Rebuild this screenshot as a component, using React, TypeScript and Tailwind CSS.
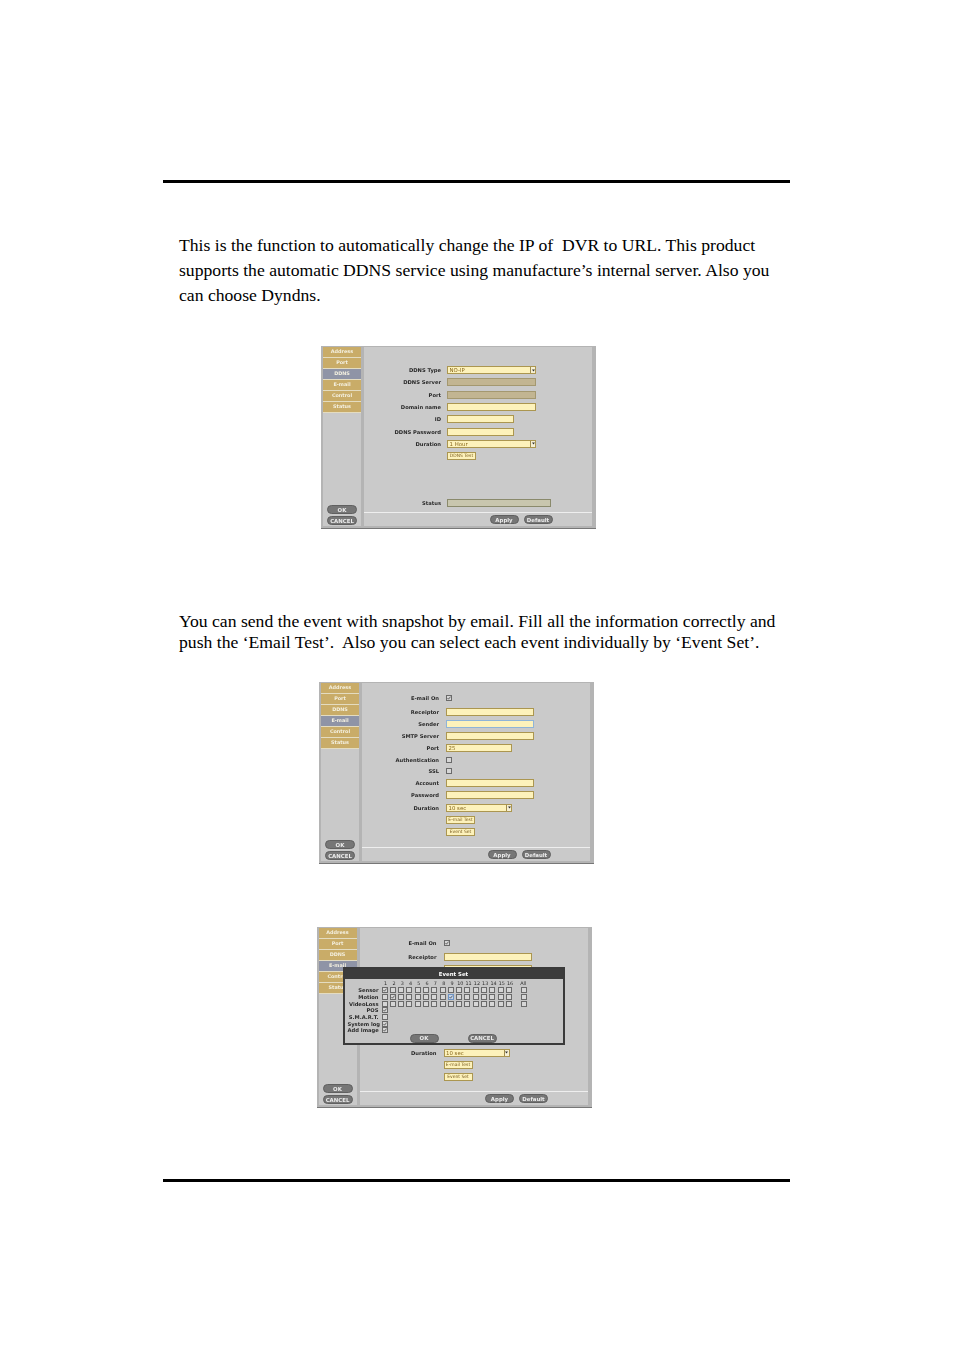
import React from "react";

const TABS = ["Address", "Port", "DDNS", "E-mail", "Control", "Status"];

function Tab({ label, active }: { label: string; active: boolean }) {
  return (
    <div
      className={`h-[11px] flex items-center justify-center text-[4.9px] font-bold text-[#f4f0e0] border-b border-[#e4dcc0] ${
        active ? "bg-[#8f94a6]" : "bg-[#c9ac68]"
      }`}
    >
      {label}
    </div>
  );
}

function GreyBtn({ label, className }: { label: string; className: string }) {
  return (
    <div
      className={`h-[9px] rounded-full bg-[#767676] border border-[#606060] text-[#ececec] text-[5.4px] leading-[6px] font-bold flex items-center justify-center ${className}`}
    >
      {label}
    </div>
  );
}

function Arrow() {
  return (
    <span className="absolute right-0 top-0 bottom-0 w-[5px] bg-[#f6f0d4] border-l border-[#a08c4c] flex items-center justify-center">
      <svg width="3" height="3" viewBox="0 0 3 3">
        <path d="M0 .6h3L1.5 2.6z" fill="#333" />
      </svg>
    </span>
  );
}

function Field({
  w,
  text,
  select,
  disabled,
  focus,
  status,
}: {
  w: string;
  text?: string;
  select?: boolean;
  disabled?: boolean;
  focus?: boolean;
  status?: boolean;
}) {
  const tone = status
    ? "bg-[#c8c6ae] border-[#8a8a6c]"
    : disabled
      ? "bg-[#c2b592] border-[#a49870]"
      : focus
        ? "bg-[#fdf2bb] border-[#8fb4d8]"
        : "bg-[#fdf2bb] border-[#ab9650]";
  return (
    <div className={`relative h-[8px] border ${tone} ${w} text-[5.4px] leading-[6px] pl-[1.5px] text-[#8a6a20] flex items-center`}>
      {text}
      {select && <Arrow />}
    </div>
  );
}

function Check({ on, focus }: { on?: boolean; focus?: boolean }) {
  return (
    <span
      className={`w-[6px] h-[6px] border flex items-center justify-center shrink-0 ${
        focus ? "border-[#6d93c4] bg-[#c4d4ea]" : "border-[#6a6a6a] bg-[#d6d6d6]"
      }`}
    >
      {on && (
        <svg width="4" height="4" viewBox="0 0 4 4">
          <path d="M.5 2l1 1.2L3.6.6" fill="none" stroke="#333" strokeWidth=".7" />
        </svg>
      )}
    </span>
  );
}

function Row({ label, labelW, className, children }: { label?: string; labelW: string; className: string; children: React.ReactNode }) {
  return (
    <div className={`flex items-center ${className}`}>
      <span className={`${labelW} text-right text-[5.2px] leading-[6px] font-bold text-[#2a2a2a] whitespace-nowrap`}>{label}</span>
      {children}
    </div>
  );
}

function TextBtn({ label }: { label: string }) {
  return (
    <div className="h-[8.5px] w-[29px] border border-[#ab9650] bg-[#fdf2bb] text-[4.5px] leading-[6px] text-[#7a5c20] flex items-center justify-center whitespace-nowrap">
      {label}
    </div>
  );
}

function Window({
  active,
  className,
  mainClass,
  children,
}: {
  active: string;
  className: string;
  mainClass: string;
  children: React.ReactNode;
}) {
  return (
    <div className={`relative w-[275px] bg-[#b4b4b4] flex pl-[2px] pt-[1px] pb-[2px] pr-[4px] gap-[3px] border-b border-[#777] blur-[0.5px] ${className}`} style={{ fontFamily: '"DejaVu Sans", sans-serif' }}>
      <div className="w-[38px] bg-[#c9c9c9] flex flex-col">
        {TABS.map((t) => (
          <Tab key={t} label={t} active={t === active} />
        ))}
        <div className="mt-auto flex flex-col items-center gap-[2px] pb-[1px]">
          <GreyBtn label="OK" className="w-[30px]" />
          <GreyBtn label="CANCEL" className="w-[30px]" />
        </div>
      </div>
      <div className="flex-1 bg-[#cacaca] flex flex-col">
        <div className={`flex-1 ${mainClass}`}>{children}</div>
        <div className="h-[14px] border-t border-[#eeeeee] flex items-center justify-end gap-[5px] pr-[39.5px]">
          <GreyBtn label="Apply" className="w-[29px]" />
          <GreyBtn label="Default" className="w-[29px]" />
        </div>
      </div>
    </div>
  );
}

function DdnsForm() {
  const l = "w-[77px]";
  return (
    <>
      <Row label="DDNS Type" labelW={l} className="h-[12.3px] gap-[6px]"><Field w="w-[89px]" text="NO-IP" select /></Row>
      <Row label="DDNS Server" labelW={l} className="h-[12.3px] gap-[6px]"><Field w="w-[89px]" disabled /></Row>
      <Row label="Port" labelW={l} className="h-[12.3px] gap-[6px]"><Field w="w-[89px]" disabled /></Row>
      <Row label="Domain name" labelW={l} className="h-[12.3px] gap-[6px]"><Field w="w-[89px]" /></Row>
      <Row label="ID" labelW={l} className="h-[12.3px] gap-[6px]"><Field w="w-[67px]" /></Row>
      <Row label="DDNS Password" labelW={l} className="h-[12.3px] gap-[6px]"><Field w="w-[67px]" /></Row>
      <Row label="Duration" labelW={l} className="h-[12.3px] gap-[6px]"><Field w="w-[89px]" text="1 Hour" select /></Row>
      <Row labelW={l} className="h-[12.3px] gap-[6px]"><TextBtn label="DDNS Test" /></Row>
      <Row label="Status" labelW={l} className="h-[12.3px] gap-[6px] mt-[34px]"><Field w="w-[104px]" status /></Row>
    </>
  );
}

function EmailForm({ focusSender }: { focusSender?: boolean }) {
  const l = "w-[77px]";
  return (
    <>
      <Row label="E-mail On" labelW={l} className="h-[14.5px] gap-[7px]"><Check on /></Row>
      <Row label="Receiptor" labelW={l} className="h-[12.3px] gap-[7px]"><Field w="w-[88px]" /></Row>
      <Row label="Sender" labelW={l} className="h-[12.3px] gap-[7px]"><Field w="w-[88px]" focus={focusSender} /></Row>
      <Row label="SMTP Server" labelW={l} className="h-[12.3px] gap-[7px]"><Field w="w-[88px]" /></Row>
      <Row label="Port" labelW={l} className="h-[12px] gap-[7px]"><Field w="w-[66px]" text="25" /></Row>
      <Row label="Authentication" labelW={l} className="h-[10.5px] gap-[7px]"><Check /></Row>
      <Row label="SSL" labelW={l} className="h-[12px] gap-[7px]"><Check /></Row>
      <Row label="Account" labelW={l} className="h-[12.5px] gap-[7px]"><Field w="w-[88px]" /></Row>
      <Row label="Password" labelW={l} className="h-[12px] gap-[7px]"><Field w="w-[88px]" /></Row>
      <Row label="Duration" labelW={l} className="h-[12.3px] gap-[7px]"><Field w="w-[66px]" text="10 sec" select /></Row>
      <Row labelW={l} className="h-[12.3px] gap-[7px]"><TextBtn label="E-mail Test" /></Row>
      <Row labelW={l} className="h-[12.3px] gap-[7px]"><TextBtn label="Event Set" /></Row>
    </>
  );
}

const NUMS = ["1", "2", "3", "4", "5", "6", "7", "8", "9", "10", "11", "12", "13", "14", "15", "16"];

function EventRow({ label, first, focus, all }: { label: string; first?: number; focus?: number; all?: boolean }) {
  return (
    <div className="flex items-center h-[6.7px]">
      <span className="w-[31px] text-right text-[5.2px] leading-[6px] font-bold text-[#2c2c2c] whitespace-nowrap">{label}</span>
      <div className="flex ml-[3px]">
        {NUMS.map((n, i) => (
          <span key={n} className="w-[8.3px] flex justify-start">
            <Check on={first === i || focus === i} focus={focus === i} />
          </span>
        ))}
      </div>
      {all && (
        <span className="ml-[6.5px]">
          <Check />
        </span>
      )}
    </div>
  );
}

function SingleRow({ label, on }: { label: string; on?: boolean }) {
  return (
    <div className="flex items-center h-[6.7px]">
      <span className="w-[31px] text-right text-[5.2px] leading-[6px] font-bold text-[#2c2c2c] whitespace-nowrap">{label}</span>
      <span className="ml-[3px]">
        <Check on={on} />
      </span>
    </div>
  );
}

function EventSet() {
  return (
    <div className="absolute left-[26px] top-[40px] w-[222px] h-[78px] border-[2px] border-[#3a3a3a] bg-[#c6c6c6] flex flex-col">
      <div className="h-[10px] bg-[#3c3c3c] text-white text-[5.4px] leading-[6px] font-bold flex items-center justify-center">Event Set</div>
      <div className="pl-[3px]">
        <div className="flex h-[8px] items-center ml-[34px] text-[4.9px] leading-[6px] text-[#2c2c2c]">
          {NUMS.map((n) => (
            <span key={n} className="w-[8.3px] text-center">{n}</span>
          ))}
          <span className="ml-[6px]">All</span>
        </div>
        <EventRow label="Sensor" first={0} all />
        <EventRow label="Motion" first={1} focus={8} all />
        <EventRow label="VideoLoss" all />
        <SingleRow label="POS" on />
        <SingleRow label="S.M.A.R.T." />
        <SingleRow label="System log" on />
        <SingleRow label="Add Image" on />
      </div>
      <div className="flex gap-[29px] ml-[65px]">
        <GreyBtn label="OK" className="w-[29px]" />
        <GreyBtn label="CANCEL" className="w-[29px]" />
      </div>
    </div>
  );
}

export default function App() {
  return (
    <div className="w-[954px] h-[1350px] bg-white overflow-hidden pt-[180px] pl-[163px] text-black" style={{ fontFamily: '"Liberation Serif", serif' }}>
      <div className="w-[627px]">
        <div className="h-[3px] bg-black" />
        <p className="mt-[50px] ml-[16px] text-[17.65px] leading-[25px] whitespace-pre">
          This is the function to automatically change the IP of  DVR to URL. This product{"\n"}
          supports the automatic DDNS service using manufacture’s internal server. Also you{"\n"}
          can choose Dyndns.
        </p>
        <Window active="DDNS" className="mt-[38px] ml-[158px] h-[183px]" mainClass="pt-[17px]">
          <DdnsForm />
        </Window>
        <p className="mt-[82px] ml-[16px] text-[17.65px] leading-[21px] whitespace-pre">
          You can send the event with snapshot by email. Fill all the information correctly and{"\n"}
          push the ‘Email Test’.  Also you can select each event individually by ‘Event Set’.
        </p>
        <Window active="E-mail" className="mt-[29px] ml-[156px] h-[182px]" mainClass="pt-[8px]">
          <EmailForm focusSender />
        </Window>
        <Window active="E-mail" className="mt-[63px] ml-[153.5px] h-[181px]" mainClass="pt-[8px]">
          <EmailForm />
          <EventSet />
        </Window>
        <div className="h-[3px] bg-black mt-[71px]" />
      </div>
    </div>
  );
}
